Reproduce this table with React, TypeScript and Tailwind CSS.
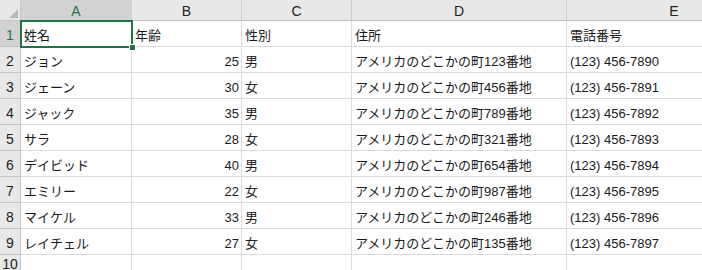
import React from 'react';

const rows = [
  ['姓名', '年齢', '性別', '住所', '電話番号'],
  ['ジョン', '25', '男', 'アメリカのどこかの町123番地', '(123) 456-7890'],
  ['ジェーン', '30', '女', 'アメリカのどこかの町456番地', '(123) 456-7891'],
  ['ジャック', '35', '男', 'アメリカのどこかの町789番地', '(123) 456-7892'],
  ['サラ', '28', '女', 'アメリカのどこかの町321番地', '(123) 456-7893'],
  ['デイビッド', '40', '男', 'アメリカのどこかの町654番地', '(123) 456-7894'],
  ['エミリー', '22', '女', 'アメリカのどこかの町987番地', '(123) 456-7895'],
  ['マイケル', '33', '男', 'アメリカのどこかの町246番地', '(123) 456-7896'],
  ['レイチェル', '27', '女', 'アメリカのどこかの町135番地', '(123) 456-7897'],
];

const widths = ['w-[111px]', 'w-[110px]', 'w-[110px]', 'w-[215px]', 'w-[215px]'];
const letters = ['A', 'B', 'C', 'D', 'E'];

export default function App() {
  return (
    <div
      className="relative h-[270px] w-[702px] overflow-hidden bg-white text-[13px] text-[#1a1a1a]"
      style={{ fontFamily: '"Liberation Sans", "Noto Sans CJK JP", sans-serif' }}
    >
      {/* column headers */}
      <div className="flex h-[21px] border-b border-[#c6c6c6] bg-[#e8e8e8]">
        <div className="relative w-[21px] shrink-0 border-r border-[#c6c6c6]">
          <div className="absolute bottom-[2px] right-[2px] h-0 w-0 border-b-[9px] border-l-[9px] border-b-[#b9b9b9] border-l-transparent" />
        </div>
        {letters.map((l, i) => (
          <div
            key={l}
            className={`${widths[i]} flex shrink-0 items-center justify-center border-r border-[#cfcfcf] pt-[3px] text-[14px] ${
              i === 0 ? 'bg-[#d2d2d2] text-[#217346]' : 'text-[#222]'
            }`}
          >
            {l}
          </div>
        ))}
      </div>

      {rows.map((r, ri) => (
        <div key={ri} className="flex h-[26px]">
          <div
            className={`flex w-[21px] shrink-0 items-end justify-center border-b border-r border-[#c6c6c6] pb-[1px] text-[14px] leading-[20px] ${
              ri === 0 ? 'bg-[#d2d2d2] text-[#217346]' : 'bg-[#e8e8e8] text-[#222]'
            }`}
          >
            {ri + 1}
          </div>
          {r.map((c, ci) => (
            <div
              key={ci}
              className={`${widths[ci]} flex shrink-0 items-end whitespace-nowrap border-b border-r border-[#dadada] px-[3px] leading-[20px] ${
                ci === 1 && ri > 0 ? 'justify-end pr-[2px]' : ''
              }`}
            >
              {c}
            </div>
          ))}
        </div>
      ))}

      {/* empty row 10, default height */}
      <div className="flex h-[20px]">
        <div className="flex w-[21px] shrink-0 items-start justify-center border-b border-r border-[#c6c6c6] bg-[#e8e8e8] pt-[1px] text-[14px] leading-[16px] text-[#222]">
          10
        </div>
        {widths.map((w, ci) => (
          <div key={ci} className={`${w} shrink-0 border-b border-r border-[#dadada]`} />
        ))}
      </div>

      {/* active cell */}
      <div className="absolute left-[20px] top-[20px] h-[28px] w-[113px] border-2 border-[#217346]" />
      <div className="absolute left-[129px] top-[44px] h-[7px] w-[7px] border border-white bg-[#217346]" />
    </div>
  );
}
